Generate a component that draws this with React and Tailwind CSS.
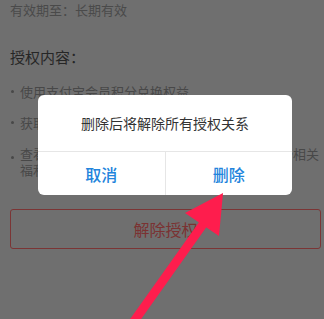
export default function App() {
  const font = { fontFamily: '"Noto Sans CJK SC", "Noto Sans", sans-serif' };
  return (
    <div className="relative w-[324px] h-[319px] overflow-hidden bg-[#6f6f6f]" style={font}>
      <div className="pl-[10px] pr-[3px] pt-[2px]">
        <div className="text-[13px] leading-[16px] text-[#4a4a4a]">有效期至：长期有效</div>
        <div className="mt-[29px] text-[15px] leading-[20px] text-[#262626]">授权内容：</div>
        <ul className="mt-[17px] flex flex-col gap-[15px] text-[13px] leading-[16px] text-[#484848]">
          <li className="flex">
            <span className="w-[10px] shrink-0 pt-[6px]"><span className="block w-[3px] h-[3px] rounded-full bg-[#484848] ml-[1px]"></span></span>
            <span>使用支付宝会员积分兑换权益</span>
          </li>
          <li className="flex">
            <span className="w-[10px] shrink-0 pt-[6px]"><span className="block w-[3px] h-[3px] rounded-full bg-[#484848] ml-[1px]"></span></span>
            <span>获取你的支付宝会员等级信息</span>
          </li>
          <li className="flex">
            <span className="w-[10px] shrink-0 pt-[10px]"><span className="block w-[3px] h-[3px] rounded-full bg-[#484848] ml-[1px]"></span></span>
            <span>查看你的支付宝会员等级、积分、成长值等身份相关福利信息</span>
          </li>
        </ul>
        <div className="mt-[31px] h-[40px] w-[311px] border border-[#7b3535] rounded-[3px] flex items-center justify-center text-[16px] text-[#7b3232]">
          解除授权
        </div>
      </div>

      <div className="absolute left-[38px] top-[95px] w-[254px] h-[100px] bg-white rounded-[6px] flex flex-col overflow-hidden">
        <div className="h-[56px] flex items-center justify-center text-[14px] text-[#333]">删除后将解除所有授权关系</div>
        <div className="flex-1 flex border-t border-[#e6e6e6]">
          <div className="flex-1 flex items-center justify-center text-[16px] font-medium text-[#2284dc]">取消</div>
          <div className="w-px bg-[#e6e6e6]"></div>
          <div className="flex-1 flex items-center justify-center text-[16px] font-medium text-[#2284dc]">删除</div>
        </div>
      </div>

      <svg className="absolute inset-0" width="324" height="319" viewBox="0 0 324 319">
        <line x1="125" y1="334" x2="206" y2="220" stroke="#fe1d4d" strokeWidth="9" />
        <polygon points="223,193 185,213 219,236" fill="#fe1d4d" />
      </svg>
    </div>
  );
}
